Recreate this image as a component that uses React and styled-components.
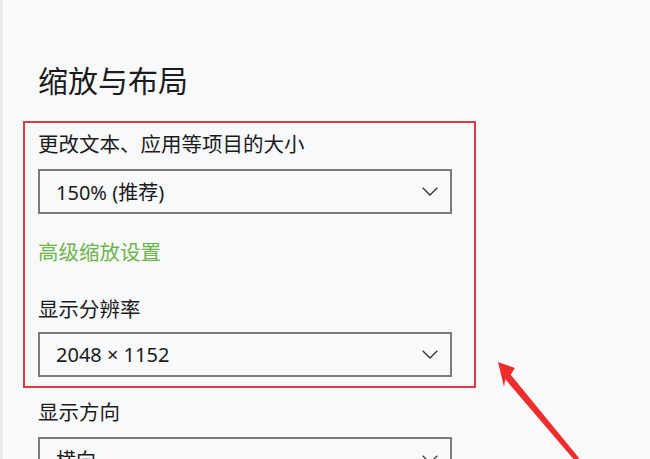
import React from "react";
import styled, { createGlobalStyle } from "styled-components";

const Global = createGlobalStyle`
  html, body { margin: 0; padding: 0; background: #f8f9fb; }
  body { font-family: "Noto Sans", "Noto Sans CJK SC", sans-serif; color: #1b1b1b; overflow: hidden; }
`;

const Page = styled.div`
  position: relative;
  width: 650px;
  height: 459px;
  box-sizing: border-box;
  border-left: 3px solid #ebebed;
  padding: 61px 0 0 20px;
  overflow: hidden;
`;

const Title = styled.h1`
  margin: 0 0 20px 15px;
  font-size: 30px;
  line-height: 40px;
  font-weight: 400;
  letter-spacing: 0;
`;

const Highlight = styled.section`
  width: 453px;
  box-sizing: border-box;
  border: 2px solid #df3a3f;
  padding: 7px 0 9px 13px;
  display: flex;
  flex-direction: column;
`;

const Group = styled.div`
  display: flex;
  flex-direction: column;
  padding-left: ${(p) => (p.$outside ? "15px" : "0")};
  margin-top: ${(p) => p.$top || 0}px;
`;

const Label = styled.div`
  font-size: 20.5px;
  line-height: 28px;
  color: ${(p) => (p.$link ? "#6db54b" : "#1b1b1b")};
`;

const Select = styled.div`
  margin-top: ${(p) => p.$gap}px;
  width: 414px;
  height: 45px;
  box-sizing: border-box;
  border: 2px solid #7b7b7b;
  display: flex;
  align-items: center;
  justify-content: space-between;
  padding: 0 12px 0 16px;
  font-size: 20px;
  color: #1b1b1b;
`;

const Arrow = styled.svg`
  position: absolute;
  left: 0;
  top: 0;
  pointer-events: none;
`;

const Chevron = () => (
  <svg width="16" height="9" viewBox="0 0 16 9">
    <path d="M0.7 0.7 L8 8 L15.3 0.7" fill="none" stroke="#333" strokeWidth="1.3" />
  </svg>
);

export default function App() {
  return (
    <>
      <Global />
      <Page>
        <Title>缩放与布局</Title>
        <Highlight>
          <Label>更改文本、应用等项目的大小</Label>
          <Select $gap={11}>
            <span>150% (推荐)</span>
            <Chevron />
          </Select>
          <Group $top={24}>
            <Label $link>高级缩放设置</Label>
          </Group>
          <Group $top={29}>
            <Label>显示分辨率</Label>
            <Select $gap={9}>
              <span>2048 × 1152</span>
              <Chevron />
            </Select>
          </Group>
        </Highlight>
        <Group $outside $top={10}>
          <Label>显示方向</Label>
          <Select $gap={11}>
            <span>横向</span>
            <Chevron />
          </Select>
        </Group>
        <Arrow width="650" height="459" viewBox="0 0 650 459">
          <polygon
            points="495,362 512,368 507.7,374.7 576,458 573,462 502.3,379.3 501,387"
            fill="#ef2d2d"
          />
        </Arrow>
      </Page>
    </>
  );
}
